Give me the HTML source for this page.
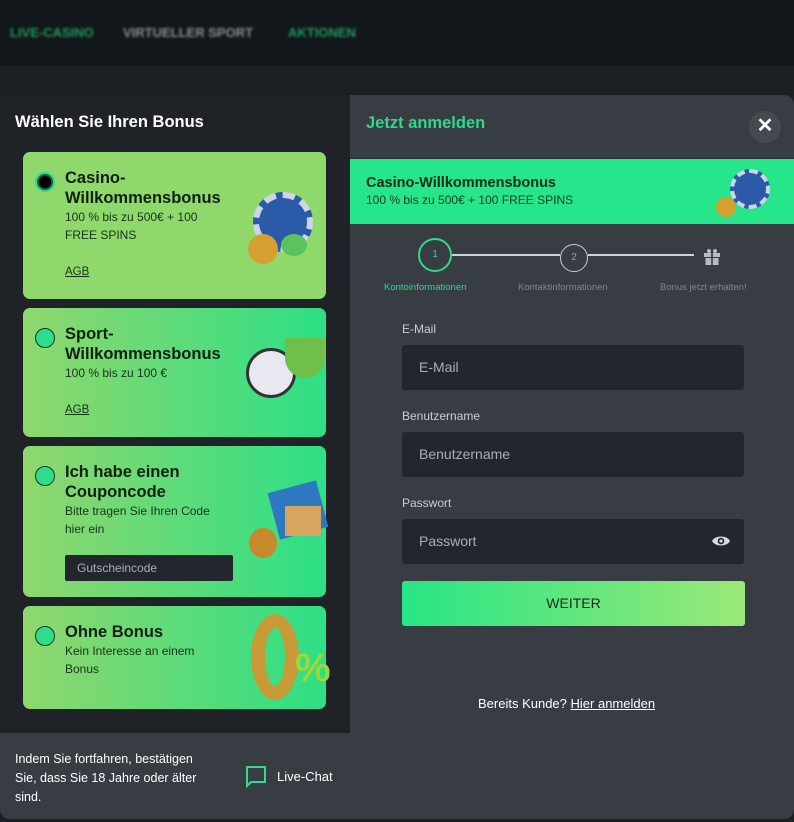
<!DOCTYPE html>
<html><head><meta charset="utf-8"><style>
*{margin:0;padding:0;box-sizing:border-box}
body{width:794px;height:822px;background:#1c2024;font-family:"Liberation Sans",sans-serif;position:relative;overflow:hidden}
.a{position:absolute}
.hdr{left:0;top:0;width:794px;height:66px;background:#12171b}
.nav{top:25px;font-size:13px;font-weight:bold;filter:blur(1.3px)}
.modal{left:0;top:95px;width:794px;height:724px;background:#383d43;border-radius:10px;overflow:hidden}
.left{left:0;top:0;width:350px;height:638px;background:#1f2328}
.card{left:23px;width:303px;border-radius:7px;background:linear-gradient(90deg,#90d76c,#2ddf86)}
.radio{left:12px;width:20px;height:20px;border-radius:50%;border:1.5px solid #0a3a20;background:#2edc8a}
.tt{left:42px;font-size:16.5px;font-weight:bold;color:#102010;line-height:20px}
.tx{left:42px;font-size:12px;color:#173317;line-height:18px}
.agb{left:42px;font-size:11.5px;color:#173317;text-decoration:underline}
.lbl{left:402px;font-size:12px;color:#c8cdd2}
.inp{left:402px;width:342px;height:45px;background:#23272d;border-radius:3px;color:#a9aeb4;font-size:14px;padding:14px 0 0 17px}
</style></head><body>
<div class="a hdr"></div>
<div class="a nav" style="left:10px;color:#1f9a5a">LIVE-CASINO</div>
<div class="a nav" style="left:123px;color:#8a8e92">VIRTUELLER SPORT</div>
<div class="a nav" style="left:288px;color:#1f9a5a">AKTIONEN</div>

<div class="a modal">
 <div class="a left">
  <div class="a" style="left:15px;top:18px;font-size:16.5px;font-weight:bold;color:#fff">Wählen Sie Ihren Bonus</div>

  <div class="a card" style="top:57px;height:147px;background:#8fd86c">
   <div class="a radio" style="top:20px;background:#1a5a3a;border:2px solid #2edc8a"><div style="width:12px;height:12px;margin:2px;border-radius:50%;background:#000"></div></div>
   <div class="a tt" style="top:16px">Casino-<br>Willkommensbonus</div>
   <div class="a tx" style="top:56px">100 % bis zu 500€ + 100<br>FREE SPINS</div>
   <div class="a agb" style="top:114px">AGB</div>
   <div class="a" style="left:230px;top:40px;width:60px;height:60px;border-radius:50%;background:#2b5aa8;border:6px dashed #cfd5e8"></div>
   <div class="a" style="left:225px;top:82px;width:30px;height:30px;border-radius:50%;background:#d4a030"></div>
   <div class="a" style="left:258px;top:82px;width:26px;height:22px;border-radius:50%;background:#5bc35b"></div>
  </div>

  <div class="a card" style="top:213px;height:129px">
   <div class="a radio" style="top:20px"></div>
   <div class="a tt" style="top:16px">Sport-<br>Willkommensbonus</div>
   <div class="a tx" style="top:56px">100 % bis zu 100 €</div>
   <div class="a agb" style="top:96px">AGB</div>
   <div class="a" style="left:223px;top:40px;width:50px;height:50px;border-radius:50%;background:#e8e8f0;border:3px solid #333"></div>
   <div class="a" style="left:262px;top:30px;width:40px;height:40px;border-radius:0 0 20px 20px;background:#6fbf4a"></div>
  </div>

  <div class="a card" style="top:351px;height:151px">
   <div class="a radio" style="top:20px"></div>
   <div class="a tt" style="top:16px">Ich habe einen<br>Couponcode</div>
   <div class="a tx" style="top:56px">Bitte tragen Sie Ihren Code<br>hier ein</div>
   <div class="a" style="left:42px;top:109px;width:168px;height:26px;background:#23272d;border-radius:2px;color:#a9aeb4;font-size:12px;padding:6px 0 0 12px">Gutscheincode</div>
   <div class="a" style="left:250px;top:40px;width:50px;height:48px;background:#2e78c0;transform:rotate(-15deg)"></div>
   <div class="a" style="left:262px;top:60px;width:36px;height:30px;background:#d7a561"></div>
   <div class="a" style="left:226px;top:82px;width:28px;height:30px;border-radius:50%;background:#c78a2a"></div>
  </div>

  <div class="a card" style="top:511px;height:103px">
   <div class="a radio" style="top:20px"></div>
   <div class="a tt" style="top:16px">Ohne Bonus</div>
   <div class="a tx" style="top:36px">Kein Interesse an einem<br>Bonus</div>
   <div class="a" style="left:228px;top:8px;width:48px;height:86px;border-radius:50%;border:14px solid #c99a38"></div>
   <div class="a" style="left:272px;top:40px;font-size:40px;font-weight:bold;color:#9fd63a">%</div>
  </div>
 </div>

 <div class="a" style="left:15px;top:655px;font-size:12.5px;line-height:19px;color:#fff;width:200px">Indem Sie fortfahren, bestätigen Sie, dass Sie 18 Jahre oder älter sind.</div>
 <svg class="a" style="left:244px;top:670px" width="24" height="24" viewBox="0 0 24 24"><path d="M3 2h18v15H7l-4 4z" fill="none" stroke="#2edc8a" stroke-width="2"/></svg>
 <div class="a" style="left:277px;top:674px;font-size:13px;color:#fff">Live-Chat</div>

 <div class="a" style="left:366px;top:19px;font-size:16.5px;font-weight:bold;color:#2ed98a">Jetzt anmelden</div>
 <div class="a" style="left:749px;top:16px;width:32px;height:32px;border-radius:50%;background:#454a50;color:#fff;font-size:20px;font-weight:bold;text-align:center;line-height:31px">✕</div>
 <div class="a" style="left:350px;top:63px;width:444px;height:2px;background:#2c3035"></div>
 <div class="a" style="left:350px;top:64px;width:444px;height:65px;background:#26e58a">
  <div class="a" style="left:16px;top:16px;font-size:14.5px;font-weight:bold;color:#102a18">Casino-Willkommensbonus</div>
  <div class="a" style="left:16px;top:34px;font-size:12px;color:#123a20">100 % bis zu 500€ + 100 FREE SPINS</div>
  <div class="a" style="left:380px;top:10px;width:40px;height:40px;border-radius:50%;background:#2b5aa8;border:4px dashed #cfd5e8"></div>
  <div class="a" style="left:366px;top:38px;width:20px;height:20px;border-radius:50%;background:#d4a030"></div>
 </div>

 <div class="a" style="left:452px;top:159px;width:108px;height:1.5px;background:#cfd3d7"></div>
 <div class="a" style="left:588px;top:159px;width:106px;height:1.5px;background:#cfd3d7"></div>
 <div class="a" style="left:418px;top:143px;width:34px;height:34px;border-radius:50%;border:2.5px solid #2ed98a;color:#2ed98a;font-size:10px;text-align:center;line-height:29px">1</div>
 <div class="a" style="left:560px;top:149px;width:28px;height:28px;border-radius:50%;border:1.5px solid #c8ccd0;color:#9aa0a6;font-size:10px;text-align:center;line-height:25px">2</div>
 <svg class="a" style="left:703px;top:153px" width="18" height="18" viewBox="0 0 18 18"><rect x="1" y="5" width="16" height="4" fill="#b8bcc0"/><rect x="2.5" y="10" width="13" height="7" fill="#b8bcc0"/><rect x="8.2" y="5" width="1.6" height="12" fill="#383d43"/><circle cx="6" cy="3" r="2" fill="#b8bcc0"/><circle cx="12" cy="3" r="2" fill="#b8bcc0"/></svg>
 <div class="a" style="left:384px;top:187px;font-size:9.5px;color:#2ed98a">Kontoinformationen</div>
 <div class="a" style="left:518px;top:187px;font-size:9.5px;color:#80868c">Kontaktinformationen</div>
 <div class="a" style="left:660px;top:187px;font-size:9.5px;color:#80868c">Bonus jetzt erhalten!</div>

 <div class="a lbl" style="top:227px">E-Mail</div>
 <div class="a inp" style="top:250px">E-Mail</div>
 <div class="a lbl" style="top:314px">Benutzername</div>
 <div class="a inp" style="top:337px">Benutzername</div>
 <div class="a lbl" style="top:401px">Passwort</div>
 <div class="a inp" style="top:424px">Passwort</div>
 <svg class="a" style="left:711px;top:439px" width="20" height="14" viewBox="0 0 20 14"><path d="M1 7C4 1 16 1 19 7C16 13 4 13 1 7z" fill="#d6d9dc"/><circle cx="10" cy="7" r="3.3" fill="#23272d"/><circle cx="10" cy="7" r="1.6" fill="#d6d9dc"/></svg>
 <div class="a" style="left:402px;top:486px;width:343px;height:45px;border-radius:3px;background:linear-gradient(90deg,#27e585,#9be878);color:#1a2a1e;font-size:14px;text-align:center;line-height:45px">WEITER</div>
 <div class="a" style="left:478px;top:601px;font-size:13px;color:#fff">Bereits Kunde? <span style="text-decoration:underline">Hier anmelden</span></div>
</div>
</body></html>
